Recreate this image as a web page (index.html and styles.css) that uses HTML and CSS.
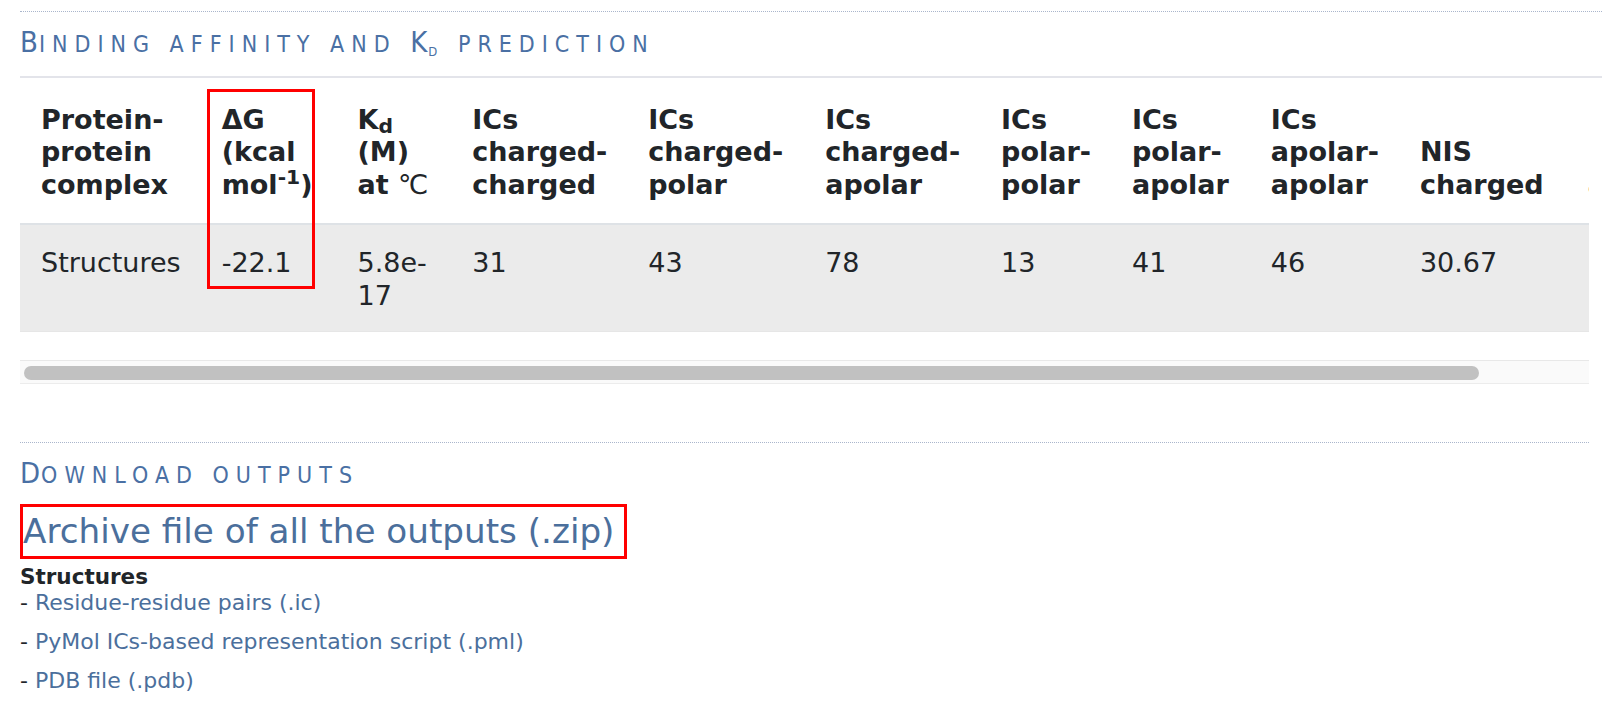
FILE: index.html
```html
<!DOCTYPE html>
<html lang="en">
<head>
    <meta charset="UTF-8">
    <title>Binding affinity results</title>
    <link rel="stylesheet" href="styles.css">
</head>
<body>
    <!-- Binding affinity table -->
    <section class="block">
        <h2 class="block-title">
            <span class="big">B</span>inding affinity and <span class="big">K</span><sub>d</sub> prediction
        </h2>

        <div class="table-wrap">
            <table class="results">
                <thead>
                    <tr>
                        <th class="c-name">Protein-protein complex</th>
                        <th class="c-dg">ΔG (kcal mol<sup>-1</sup>)</th>
                        <th class="c-kd">K<sub>d</sub> (M) <span class="nowrap">at <span class="deg">℃</span></span></th>
                        <th>ICs charged-charged</th>
                        <th class="c-cp">ICs charged-polar</th>
                        <th>ICs charged-apolar</th>
                        <th>ICs polar-polar</th>
                        <th class="c-pa">ICs polar-apolar</th>
                        <th>ICs apolar-apolar</th>
                        <th class="c-nis">NIS charged</th>
                        <th>NIS apolar</th>
                    </tr>
                </thead>
                <tbody>
                    <tr>
                        <td>Structures</td>
                        <td>-22.1</td>
                        <td>5.8e-<wbr>17</td>
                        <td>31</td>
                        <td>43</td>
                        <td>78</td>
                        <td>13</td>
                        <td>41</td>
                        <td>46</td>
                        <td>30.67</td>
                        <td>38.67</td>
                    </tr>
                </tbody>
            </table>
            <div class="mark mark-dg"></div>
        </div>

        <!-- fake horizontal scrollbar -->
        <div class="scrollbar">
            <div class="thumb"></div>
        </div>
    </section>

    <!-- Downloads -->
    <section class="block downloads">
        <h2 class="block-title"><span class="big">D</span>ownload outputs</h2>

        <a class="archive" href="#">Archive file of all the outputs (.zip)</a>

        <h4 class="files-title">Structures</h4>
        <ul class="files">
            <li>- <a href="#">Residue-residue pairs (.ic)</a></li>
            <li>- <a href="#">PyMol ICs-based representation script (.pml)</a></li>
            <li>- <a href="#">PDB file (.pdb)</a></li>
        </ul>
    </section>
</body>
</html>
```

FILE: styles.css
```css
* {
    margin: 0;
    padding: 0;
    box-sizing: border-box;
}

body {
    font-family: "DejaVu Sans", Verdana, sans-serif;
    color: #212529;
    background: #fff;
    padding: 11px 0 0 20px;
    overflow: hidden;
}

a {
    color: #4b6f9c;
    text-decoration: none;
}

/* Section blocks */
.block {
    border-top: 1px dotted #aab6cc;
}

.block-title {
    font-family: "Liberation Sans Narrow", "DejaVu Sans Condensed", "Liberation Sans", sans-serif;
    font-weight: normal;
    font-size: 23px;
    line-height: 30px;
    text-transform: uppercase;
    letter-spacing: 7px;
    color: #4a70a4;
    padding-top: 15px;
}

.block-title .big {
    font-size: 29px;
    letter-spacing: 1px;
}

.block-title sub {
    font-size: 13px;
    vertical-align: -4px;
    line-height: 0;
}

.block:first-child .block-title {
    padding-bottom: 17px;
    border-bottom: 2px solid #e3e4ea;
}

/* Results table */
.table-wrap {
    position: relative;
    width: 1569px;
    overflow: hidden;
}

.results {
    width: 1px;
    border-collapse: collapse;
    font-size: 27px;
    line-height: 1.2;
}

.results th {
    font-weight: bold;
    text-align: left;
    vertical-align: bottom;
    padding: 26px 20px 22px 21px;
    border-bottom: 2px solid #dee2e6;
}

.results .c-name,
.results .c-cp,
.results .c-pa {
    padding-right: 21px;
}

.results .c-dg {
    padding-right: 24px;
}

.results .c-kd,
.results .c-nis {
    padding-right: 23px;
}

.results th sup {
    font-size: 75%;
    line-height: 0;
    position: relative;
    top: -0.5em;
    vertical-align: baseline;
}

.results th sub {
    font-size: 75%;
    line-height: 0;
    position: relative;
    bottom: -0.2em;
    vertical-align: baseline;
}

.results th .nowrap {
    white-space: nowrap;
}

.results th .deg {
    font-weight: normal;
}

.results td {
    vertical-align: top;
    padding: 22px 20px 19px 21px;
    background: #ebebeb;
    border-bottom: 1px solid #e6e6e6;
}

/* red highlight boxes */
.mark {
    position: absolute;
    border: 3px solid #f00;
}

.mark-dg {
    left: 187px;
    top: 11px;
    width: 108px;
    height: 200px;
}

.scrollbar {
    width: 1569px;
    height: 24px;
    margin-top: 28px;
    padding: 5px 0 0 4px;
    background: #fafafa;
    border-top: 1px solid #e8e8e8;
    border-bottom: 1px solid #ececec;
}

.thumb {
    width: 1455px;
    height: 14px;
    border-radius: 7px;
    background: #c1c1c1;
}

/* Downloads */
.downloads {
    width: 1569px;
    margin-top: 58px;
}

.archive {
    display: inline-block;
    margin-top: 14px;
    font-size: 34.2px;
    line-height: 49px;
    padding-right: 10px;
    border: 3px solid #f00;
}

.files-title {
    font-size: 21.5px;
    line-height: 26px;
    margin-top: 5px;
}

.files {
    list-style: none;
    font-size: 22px;
    line-height: 26px;
}

.files li {
    margin-bottom: 13px;
}
```
